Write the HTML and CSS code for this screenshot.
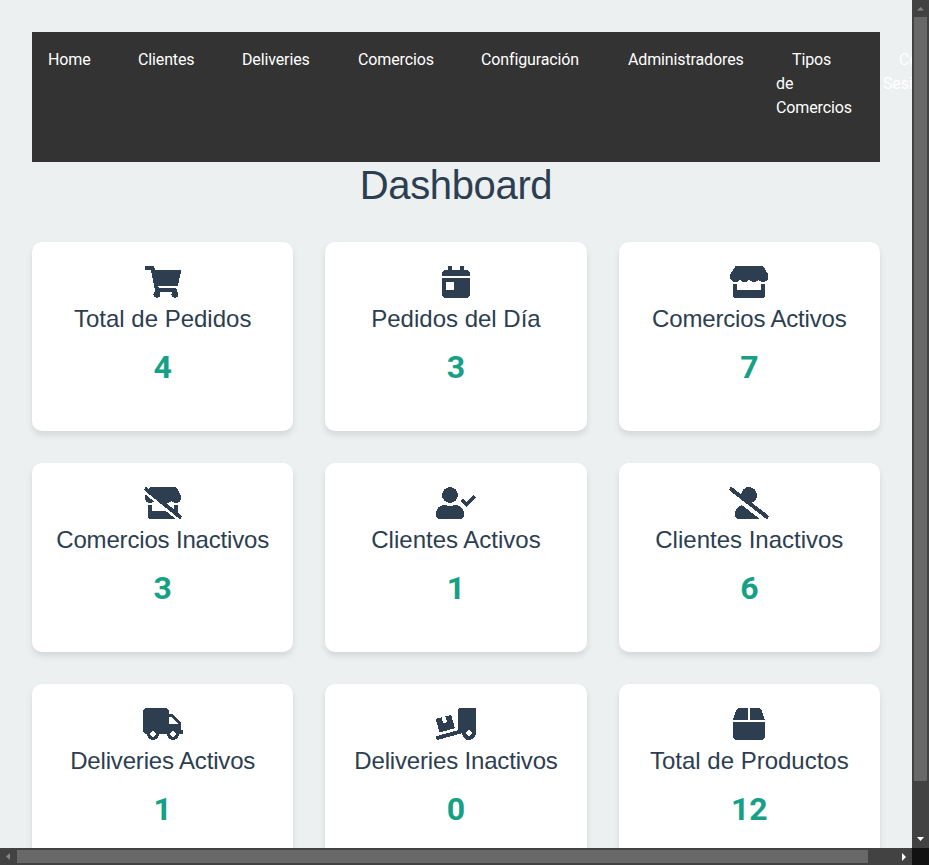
FILE: index.html
```html
<!DOCTYPE html>
<html lang="es">
<head>
<meta charset="utf-8">
<title>Dashboard</title>
<link rel="stylesheet" href="styles.css">
</head>
<body>
<div class="frame">
  <main class="viewport">
    <nav class="nav">
      <ul class="menu">
        <li><a>Home</a></li>
        <li><a>Clientes</a></li>
        <li><a>Deliveries</a></li>
        <li><a>Comercios</a></li>
        <li><a>Configuración</a></li>
        <li><a>Administradores</a></li>
        <li><a>Tipos<br>de<br>Comercios</a></li>
        <li><a>Cerrar<br>Sesión</a></li>
      </ul>
    </nav>
    <h1>Dashboard</h1>
    <section class="cards">
      <article class="card">
        <svg class="icon" viewBox="0 0 576 512"><path d="M528.12 301.319l47.273-208C578.806 78.301 567.391 64 551.99 64H159.208l-9.166-44.81C147.758 8.021 137.93 0 126.529 0H24C10.745 0 0 10.745 0 24v16c0 13.255 10.745 24 24 24h69.883l70.248 343.435C147.325 417.1 136 435.222 136 456c0 30.928 25.072 56 56 56s56-25.072 56-56c0-15.674-6.447-29.835-16.824-40h209.647C430.447 426.165 424 440.326 424 456c0 30.928 25.072 56 56 56s56-25.072 56-56c0-22.172-12.888-41.332-31.579-50.405l5.517-24.276c3.413-15.018-8.002-29.319-23.403-29.319H218.117l-6.545-32h293.145c11.206 0 20.92-7.754 23.403-18.681z"/></svg>
        <h3>Total de Pedidos</h3><p>4</p>
      </article>
      <article class="card">
        <svg class="icon" viewBox="0 0 448 512"><path d="M0 464c0 26.5 21.5 48 48 48h352c26.5 0 48-21.5 48-48V192H0v272zm64-192c0-8.8 7.2-16 16-16h96c8.8 0 16 7.2 16 16v96c0 8.8-7.2 16-16 16H80c-8.8 0-16-7.2-16-16v-96zM400 64h-48V16c0-8.8-7.2-16-16-16h-32c-8.8 0-16 7.2-16 16v48H160V16c0-8.8-7.2-16-16-16h-32c-8.8 0-16 7.2-16 16v48H48C21.5 64 0 85.5 0 112v48h448v-48c0-26.5-21.5-48-48-48z"/></svg>
        <h3>Pedidos del Día</h3><p>3</p>
      </article>
      <article class="card snug">
        <svg class="icon" viewBox="0 0 616 512"><path d="M602 118.6L537.1 15C531.3 5.7 521 0 510 0H106C95 0 84.7 5.7 78.9 15L14 118.6c-33.5 53.5-3.8 127.9 58.8 136.4 4.5.6 9.1.9 13.7.9 29.6 0 55.8-13 73.8-33.1 18 20.1 44.3 33.1 73.8 33.1 29.6 0 55.8-13 73.8-33.1 18 20.1 44.3 33.1 73.8 33.1 29.6 0 55.8-13 73.8-33.1 18.1 20.1 44.3 33.1 73.8 33.1 4.7 0 9.2-.3 13.7-.9 62.8-8.4 92.6-82.8 59-136.4zM529.5 288c-10 0-19.9-1.5-29.5-3.8V384H116v-99.8c-9.6 2.2-19.5 3.8-29.5 3.8-6 0-12.1-.4-18-1.2-5.6-.8-11.1-2.1-16.4-3.6V480c0 17.7 14.3 32 32 32h448c17.7 0 32-14.3 32-32V283.2c-5.4 1.6-10.8 2.9-16.4 3.6-6.1.8-12.1 1.2-18.2 1.2z"/></svg>
        <h3>Comercios Activos</h3><p>7</p>
      </article>
      <article class="card snug">
        <svg class="icon" viewBox="0 0 608 512"><path d="M121.51,384V284.2a119.43,119.43,0,0,1-28,3.8,123.46,123.46,0,0,1-17.1-1.2,114.88,114.88,0,0,1-15.6-3.6V480c0,17.7,13.59,32,30.4,32H505.75L348.42,384Zm-28-128.09c25.1,0,47.29-10.72,64-27.24L24,120.05c-30.52,53.39-2.45,126.53,56.49,135A95.68,95.68,0,0,0,93.48,255.91ZM602.13,458.09,547.2,413.41V283.2a93.5,93.5,0,0,1-15.57,3.6,127.31,127.31,0,0,1-17.29,1.2,114.89,114.89,0,0,1-28-3.8v79.68L348.52,251.77a88.06,88.06,0,0,0,25.41,4.14c28.11,0,53-13,70.11-33.11,17.19,20.11,42.08,33.11,70.11,33.11a94.31,94.31,0,0,0,13-.91c59.66-8.41,88-82.8,56.06-136.4L521.55,15A30.1,30.1,0,0,0,495.81,0H112A30.11,30.11,0,0,0,86.27,15L76.88,30.78,43.19,3.38A14.68,14.68,0,0,0,21.86,6.19L3.2,31.45A16.58,16.58,0,0,0,5.87,53.91L564.81,508.63a14.69,14.69,0,0,0,21.33-2.82l18.66-25.26A16.58,16.58,0,0,0,602.13,458.09Z"/></svg>
        <h3>Comercios Inactivos</h3><p>3</p>
      </article>
      <article class="card">
        <svg class="icon" viewBox="0 0 640 512"><path d="M224 256c70.7 0 128-57.3 128-128S294.7 0 224 0 96 57.3 96 128s57.3 128 128 128zm89.6 32h-16.7c-22.2 10.2-46.9 16-72.9 16s-50.6-5.8-72.9-16h-16.7C60.2 288 0 348.2 0 422.4V464c0 26.5 21.5 48 48 48h352c26.5 0 48-21.5 48-48v-41.6c0-74.2-60.2-134.4-134.4-134.4zm323-128.4l-27.8-28.1c-4.6-4.7-12.1-4.7-16.8-.1l-104.8 104-45.5-45.8c-4.6-4.7-12.1-4.7-16.8-.1l-28.1 27.9c-4.7 4.6-4.7 12.1-.1 16.8l81.7 82.3c4.6 4.7 12.1 4.7 16.8.1l141.3-140.2c4.6-4.7 4.7-12.2.1-16.8z"/></svg>
        <h3>Clientes Activos</h3><p>1</p>
      </article>
      <article class="card">
        <svg class="icon" viewBox="0 0 640 512"><path d="M633.8 458.1L362.3 248.3C412.1 230.7 448 183.8 448 128 448 57.3 390.7 0 320 0c-67.1 0-121.5 51.8-126.9 117.4L45.5 3.4C38.5-2 28.5-.8 23 6.2L3.4 31.4c-5.4 7-4.2 17 2.8 22.4l588.4 454.7c7 5.5 17 4.2 22.5-2.8l19.6-25.2c5.4-6.9 4.2-17-2.9-22.4zM96 422.4V464c0 26.5 21.5 48 48 48h350.2L207.4 290.3C144.2 301.3 96 356 96 422.4z"/></svg>
        <h3>Clientes Inactivos</h3><p>6</p>
      </article>
      <article class="card snug">
        <svg class="icon" viewBox="0 0 640 512"><path d="M624 352h-16V243.9c0-12.7-5.1-24.9-14.1-33.9L494 110.1c-9-9-21.2-14.1-33.9-14.1H416V48c0-26.5-21.5-48-48-48H48C21.5 0 0 21.5 0 48v320c0 26.5 21.5 48 48 48h16c0 53 43 96 96 96s96-43 96-96h128c0 53 43 96 96 96s96-43 96-96h48c8.8 0 16-7.2 16-16v-32c0-8.8-7.2-16-16-16zM160 464c-26.5 0-48-21.5-48-48s21.5-48 48-48 48 21.5 48 48-21.5 48-48 48zm320 0c-26.5 0-48-21.5-48-48s21.5-48 48-48 48 21.5 48 48-21.5 48-48 48zm80-208H416V144h44.1l99.9 99.9V256z"/></svg>
        <h3>Deliveries Activos</h3><p>1</p>
      </article>
      <article class="card snug">
        <svg class="icon" viewBox="0 0 640 512"><path d="M50.2 375.6c2.3 8.5 11.1 13.6 19.6 11.3l216.4-58c8.5-2.3 13.6-11.1 11.3-19.6l-49.7-185.5c-2.3-8.5-11.1-13.6-19.6-11.3L151 133.3l24.8 92.7-61.8 16.5-24.8-92.7-77.3 20.7C3.4 172.8-1.7 181.6.6 190.1l49.6 185.5zM384 0c-17.7 0-32 14.3-32 32v323.6L5.9 450c-4.3 1.2-6.8 5.6-5.6 9.8l12.6 46.3c1.2 4.3 5.6 6.8 9.8 5.6l393.7-107.4C418.8 464.1 467.6 512 528 512c61.9 0 112-50.1 112-112V0H384zm144 448c-26.5 0-48-21.5-48-48s21.5-48 48-48 48 21.5 48 48-21.5 48-48 48z"/></svg>
        <h3>Deliveries Inactivos</h3><p>0</p>
      </article>
      <article class="card">
        <svg class="icon" viewBox="0 0 512 512"><path d="M509.5 184.6L458.9 32.8C452.4 13.2 434.1 0 413.4 0H272v192h238.7c-.4-2.5-.4-5-1.2-7.4zM240 0H98.6c-20.7 0-39 13.2-45.5 32.8L2.5 184.6c-.8 2.4-.8 4.9-1.2 7.4H240V0zM0 224v240c0 26.5 21.5 48 48 48h416c26.5 0 48-21.5 48-48V224H0z"/></svg>
        <h3>Total de Productos</h3><p>12</p>
      </article>
    </section>
  </main>
  <div class="bar bar-y">
    <svg class="arrow" viewBox="0 0 17 17"><path class="dim" d="M5 10.500h7L8.500 7z"/></svg>
    <div class="thumb thumb-y"></div>
    <svg class="arrow end" viewBox="0 0 17 17"><path d="M5 6h7l-3.500 4z"/></svg>
  </div>
  <div class="bar bar-x">
    <svg class="arrow" viewBox="0 0 17 17"><path class="dim" d="M10 5v7L6 8.500z"/></svg>
    <div class="thumb thumb-x"></div>
    <svg class="arrow end" viewBox="0 0 17 17"><path d="M7 5v8l4-4z"/></svg>
  </div>
  <div class="corner"></div>
</div>
</body>
</html>
```
FILE: styles.css
```css
* { box-sizing: border-box; }
body {
  margin: 0;
  overflow: hidden;
  font: 16px/24px Roboto, sans-serif;
  color: #2c3e50;
}
.frame {
  display: grid;
  grid-template: 848px 17px / 912px 17px;
  width: 929px;
  height: 865px;
}
.viewport {
  overflow: hidden;
  padding: 32px;
  background: #ecf0f1;
}
.nav {
  height: 130px;
  padding: 16px 0;
  background: #333;
}
.menu {
  display: grid;
  grid-template-columns: 74px 88px 100px 107px 131px 148px 91px 67px;
  column-gap: 16px;
  margin: 0;
  padding: 0;
  letter-spacing: -0.13px;
  white-space: nowrap;
  list-style: none;
}
.menu a {
  padding: 0 16px;
  color: #fff;
}
h1 {
  margin: 0 0 33px;
  font: 400 40px/47px "Liberation Sans", Arial, sans-serif;
  letter-spacing: -0.35px;
  text-align: center;
}
.cards {
  display: grid;
  grid-template-columns: repeat(3, 1fr);
  gap: 32px;
}
.card {
  display: flex;
  flex-direction: column;
  align-items: center;
  height: 189px;
  padding: 24px 16px;
  border-radius: 10px;
  background: #fff;
  box-shadow: 0 4px 6px rgba(0, 0, 0, 0.1);
}
.icon {
  display: block;
  flex: none;
  height: 32px;
  fill: #2c3e50;
  shape-rendering: crispEdges;
}
h3 {
  margin: 6px 0 15px;
  font: 400 24px/29px "Liberation Sans", Arial, sans-serif;
  white-space: nowrap;
}
.snug h3 { letter-spacing: -0.17px; }
.card p {
  margin: 0;
  font-size: 32px;
  font-weight: 700;
  line-height: 38px;
  color: #16a085;
}
.bar {
  display: flex;
  background: #424242;
}
.bar-y { flex-direction: column; }
.thumb { background: #686868; }
.thumb-y { width: 13px; height: 764px; margin-left: 2px; }
.thumb-x { width: 851px; height: 13px; margin-top: 2px; }
.arrow {
  flex: none;
  width: 17px;
  height: 17px;
  fill: #fff;
}
.bar-y .end { margin-top: auto; }
.bar-x .end { margin-left: auto; }
.dim { fill: #868686; }
.corner { background: #121212; }
```
